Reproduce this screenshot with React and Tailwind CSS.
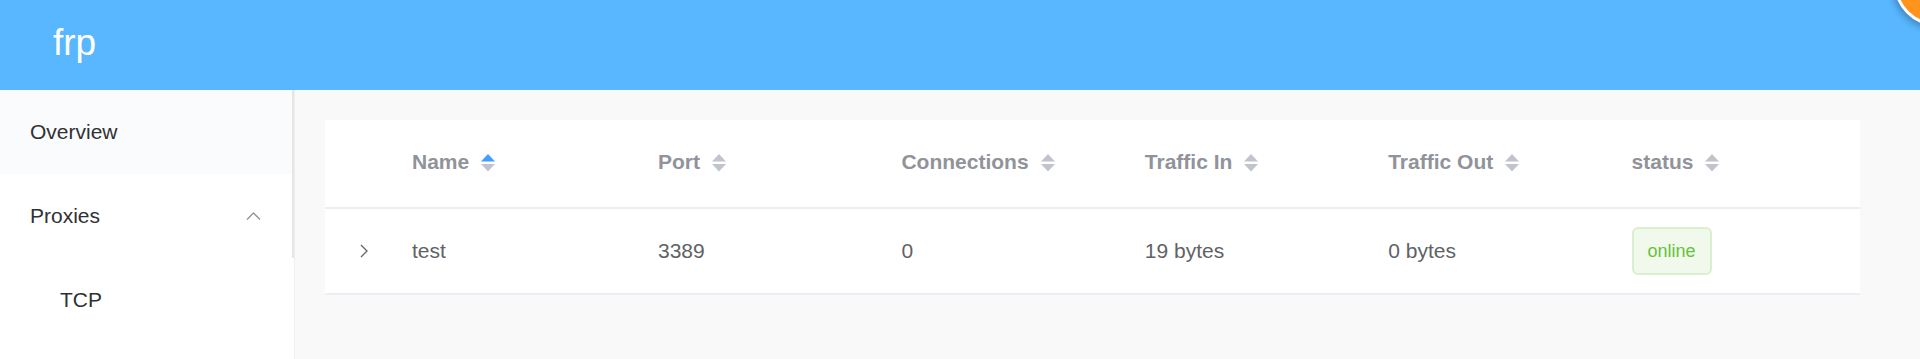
import React from 'react';

const columns = ['Name', 'Port', 'Connections', 'Traffic In', 'Traffic Out', 'status'];

const rows = [
  { name: 'test', port: '3389', conns: '0', trafficIn: '19 bytes', trafficOut: '0 bytes', status: 'online' },
];

function SortCaret({ active }) {
  return (
    <svg width="14" height="20" viewBox="0 0 14 20" className="ml-[12px] shrink-0 mt-[3px]">
      <polygon points="0,8.5 7,1 14,8.5" fill={active ? '#409eff' : '#c0c4cc'} />
      <polygon points="0,11 14,11 7,18.5" fill="#c0c4cc" />
    </svg>
  );
}

function ExpandArrow() {
  return (
    <svg width="10" height="14" viewBox="0 0 10 14">
      <polyline points="2,1 8,7 2,13" fill="none" stroke="#606266" strokeWidth="1.3" />
    </svg>
  );
}

export default function App() {
  return (
    <div className="min-h-[359px] w-[1920px] flex flex-col bg-[#f9f9f9] font-['Liberation_Sans',Arial,sans-serif]">
      <header className="relative h-[90px] bg-[#58b7ff] flex items-center px-[53px] pb-[5px] overflow-hidden">
        <span className="text-white text-[37px] leading-none">frp</span>
        <div className="absolute right-[-60px] top-[-60px] w-[86px] h-[86px] rounded-full bg-[#ff931e] border-[3px] border-white shadow-[-2px_3px_6px_rgba(0,0,0,0.25)]" />
      </header>

      <div className="flex flex-1">
        <aside className="w-[295px] shrink-0 bg-white border-r border-[#efefef] flex flex-col">
          <div className="w-[294px] border-r-2 border-[#e6e6e6]">
            <div className="h-[84px] flex items-center pl-[30px] bg-[#fafbfd] text-[21px] text-[#303133]">
              Overview
            </div>
            <div className="h-[84px] flex items-center justify-between pl-[30px] pr-[31px] text-[21px] text-[#303133]">
              <span>Proxies</span>
              <svg width="15" height="8" viewBox="0 0 15 8">
                <polyline points="1,7.5 7.5,1 14,7.5" fill="none" stroke="#909399" strokeWidth="1.3" />
              </svg>
            </div>
          </div>
          <div className="h-[84px] flex items-center pl-[60px] text-[21px] text-[#303133]">
            TCP
          </div>
        </aside>

        <main className="flex-1 pt-[30px] pl-[30px] pr-[60px]">
          <div className="bg-white">
            <div className="grid grid-cols-[72px_246px_repeat(5,1fr)] h-[89px] border-b-2 border-[#ebeef5] items-center pb-[4px]">
              <div />
              {columns.map((c, i) => (
                <div key={c} className="flex items-center pl-[15px] text-[21px] font-bold text-[#909399]">
                  <span>{c}</span>
                  <SortCaret active={i === 0} />
                </div>
              ))}
            </div>
            {rows.map((r) => (
              <div key={r.name} className="grid grid-cols-[72px_246px_repeat(5,1fr)] h-[86px] border-b-2 border-[#ebeef5] items-center text-[21px] text-[#606266]">
                <div className="flex justify-center pl-[5px]">
                  <ExpandArrow />
                </div>
                <div className="pl-[15px]">{r.name}</div>
                <div className="pl-[15px]">{r.port}</div>
                <div className="pl-[15px]">{r.conns}</div>
                <div className="pl-[15px]">{r.trafficIn}</div>
                <div className="pl-[15px]">{r.trafficOut}</div>
                <div className="pl-[15px]">
                  <span className="inline-flex items-center h-[48px] px-[14px] rounded-[6px] bg-[#f0f9eb] border-2 border-[#d9efcd] text-[18px] text-[#67c23a]">
                    {r.status}
                  </span>
                </div>
              </div>
            ))}
          </div>
        </main>
      </div>
    </div>
  );
}
